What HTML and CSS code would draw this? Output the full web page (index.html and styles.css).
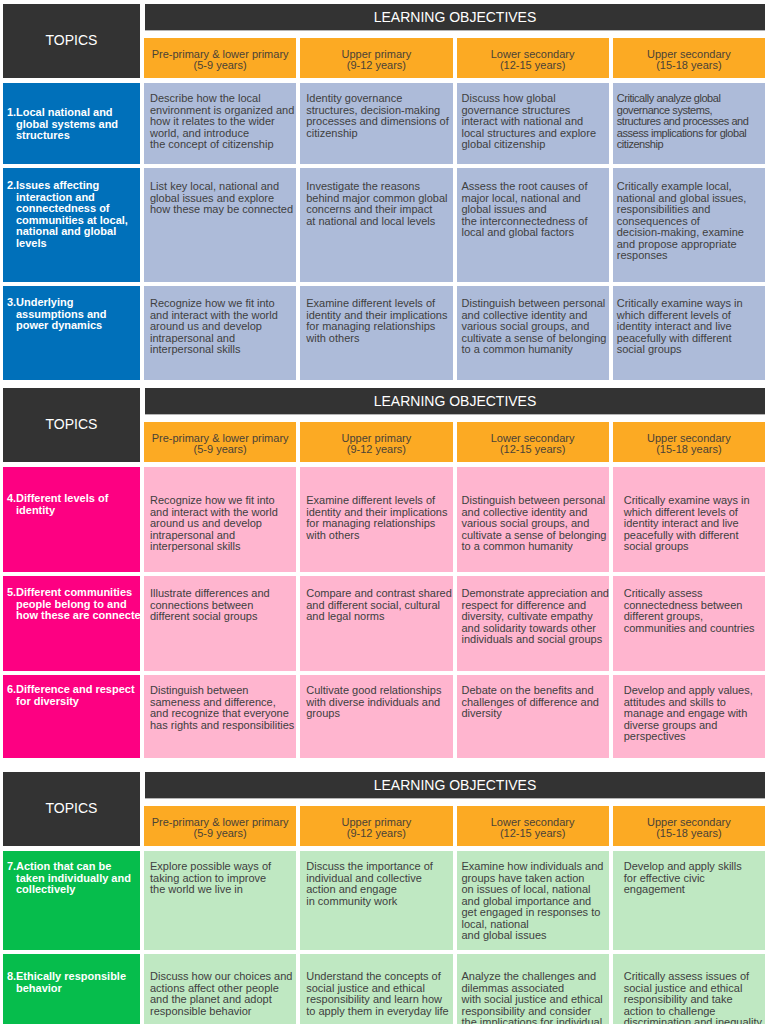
FILE: index.html
```html
<!DOCTYPE html>
<html lang="en">
<head>
<meta charset="utf-8">
<title>Global citizenship learning objectives</title>
<link rel="stylesheet" href="styles.css">
</head>
<body>
<div class="page">

  <section class="block block-blue">
    <div class="head">
      <div class="topics">TOPICS</div>
      <div class="lo">LEARNING OBJECTIVES</div>
      <div class="age">Pre-primary &amp; lower primary<br>(5-9 years)</div>
      <div class="age">Upper primary<br>(9-12 years)</div>
      <div class="age">Lower secondary<br>(12-15 years)</div>
      <div class="age">Upper secondary<br>(15-18 years)</div>
    </div>
    <div class="row row-1">
      <div class="topic"><span class="num">1.</span><span>Local national and<br>global systems and<br>structures</span></div>
      <div class="obj">Describe how the local<br>environment is organized and<br>how it relates to the wider<br>world, and introduce<br>the concept of citizenship</div>
      <div class="obj">Identity governance<br>structures, decision-making<br>processes and dimensions of<br>citizenship</div>
      <div class="obj">Discuss how global<br>governance structures<br>interact with national and<br>local structures and explore<br>global citizenship</div>
      <div class="obj condensed">Critically analyze global<br>governance systems,<br>structures and processes and<br>assess implications for global<br>citizenship</div>
    </div>
    <div class="row row-2">
      <div class="topic"><span class="num">2.</span><span>Issues affecting<br>interaction and<br>connectedness of<br>communities at local,<br>national and global<br>levels</span></div>
      <div class="obj">List key local, national and<br>global issues and explore<br>how these may be connected</div>
      <div class="obj">Investigate the reasons<br>behind major common global<br>concerns and their impact<br>at national and local levels</div>
      <div class="obj">Assess the root causes of<br>major local, national and<br>global issues and<br>the interconnectedness of<br>local and global factors</div>
      <div class="obj">Critically example local,<br>national and global issues,<br>responsibilities and<br>consequences of<br>decision-making, examine<br>and propose appropriate<br>responses</div>
    </div>
    <div class="row row-3">
      <div class="topic"><span class="num">3.</span><span>Underlying<br>assumptions and<br>power dynamics</span></div>
      <div class="obj">Recognize how we fit into<br>and interact with the world<br>around us and develop<br>intrapersonal and<br>interpersonal skills</div>
      <div class="obj">Examine different levels of<br>identity and their implications<br>for managing relationships<br>with others</div>
      <div class="obj">Distinguish between personal<br>and collective identity and<br>various social groups, and<br>cultivate a sense of belonging<br>to a common humanity</div>
      <div class="obj">Critically examine ways in<br>which different levels of<br>identity interact and live<br>peacefully with different<br>social groups</div>
    </div>
  </section>

  <section class="block block-pink">
    <div class="head">
      <div class="topics">TOPICS</div>
      <div class="lo">LEARNING OBJECTIVES</div>
      <div class="age">Pre-primary &amp; lower primary<br>(5-9 years)</div>
      <div class="age">Upper primary<br>(9-12 years)</div>
      <div class="age">Lower secondary<br>(12-15 years)</div>
      <div class="age">Upper secondary<br>(15-18 years)</div>
    </div>
    <div class="row row-4">
      <div class="topic"><span class="num">4.</span><span>Different levels of<br>identity</span></div>
      <div class="obj">Recognize how we fit into<br>and interact with the world<br>around us and develop<br>intrapersonal and<br>interpersonal skills</div>
      <div class="obj">Examine different levels of<br>identity and their implications<br>for managing relationships<br>with others</div>
      <div class="obj">Distinguish between personal<br>and collective identity and<br>various social groups, and<br>cultivate a sense of belonging<br>to a common humanity</div>
      <div class="obj">Critically examine ways in<br>which different levels of<br>identity interact and live<br>peacefully with different<br>social groups</div>
    </div>
    <div class="row row-5">
      <div class="topic"><span class="num">5.</span><span>Different communities<br>people belong to and<br>how these are connected</span></div>
      <div class="obj">Illustrate differences and<br>connections between<br>different social groups</div>
      <div class="obj">Compare and contrast shared<br>and different social, cultural<br>and legal norms</div>
      <div class="obj">Demonstrate appreciation and<br>respect for difference and<br>diversity, cultivate empathy<br>and solidarity towards other<br>individuals and social groups</div>
      <div class="obj">Critically assess<br>connectedness between<br>different groups,<br>communities and countries</div>
    </div>
    <div class="row row-6">
      <div class="topic"><span class="num">6.</span><span>Difference and respect<br>for diversity</span></div>
      <div class="obj">Distinguish between<br>sameness and difference,<br>and recognize that everyone<br>has rights and responsibilities</div>
      <div class="obj">Cultivate good relationships<br>with diverse individuals and<br>groups</div>
      <div class="obj">Debate on the benefits and<br>challenges of difference and<br>diversity</div>
      <div class="obj">Develop and apply values,<br>attitudes and skills to<br>manage and engage with<br>diverse groups and<br>perspectives</div>
    </div>
  </section>

  <section class="block block-green">
    <div class="head">
      <div class="topics">TOPICS</div>
      <div class="lo">LEARNING OBJECTIVES</div>
      <div class="age">Pre-primary &amp; lower primary<br>(5-9 years)</div>
      <div class="age">Upper primary<br>(9-12 years)</div>
      <div class="age">Lower secondary<br>(12-15 years)</div>
      <div class="age">Upper secondary<br>(15-18 years)</div>
    </div>
    <div class="row row-7">
      <div class="topic"><span class="num">7.</span><span>Action that can be<br>taken individually and<br>collectively</span></div>
      <div class="obj">Explore possible ways of<br>taking action to improve<br>the world we live in</div>
      <div class="obj">Discuss the importance of<br>individual and collective<br>action and engage<br>in community work</div>
      <div class="obj">Examine how individuals and<br>groups have taken action<br>on issues of local, national<br>and global importance and<br>get engaged in responses to<br>local, national<br>and global issues</div>
      <div class="obj">Develop and apply skills<br>for effective civic<br>engagement</div>
    </div>
    <div class="row row-8">
      <div class="topic"><span class="num">8.</span><span>Ethically responsible<br>behavior</span></div>
      <div class="obj">Discuss how our choices and<br>actions affect other people<br>and the planet and adopt<br>responsible behavior</div>
      <div class="obj">Understand the concepts of<br>social justice and ethical<br>responsibility and learn how<br>to apply them in everyday life</div>
      <div class="obj">Analyze the challenges and<br>dilemmas associated<br>with social justice and ethical<br>responsibility and consider<br>the implications for individual<br>and collective action</div>
      <div class="obj">Critically assess issues of<br>social justice and ethical<br>responsibility and take<br>action to challenge<br>discrimination and inequality</div>
    </div>
  </section>

</div>
</body>
</html>
```

FILE: styles.css
```css
* { box-sizing: border-box; }

html, body {
  margin: 0;
  padding: 0;
  background: #ffffff;
}

body {
  font-family: "Liberation Sans", Arial, sans-serif;
  color: #404040;
}

.page {
  width: 768px;
  padding: 4px 3px 0 3px;
  display: flex;
  flex-direction: column;
}

.block {
  display: flex;
  flex-direction: column;
  gap: 4px;
}

.block-pink { margin-top: 8px; }
.block-green { margin-top: 14px; }

.head,
.row {
  display: grid;
  grid-template-columns: 137px repeat(4, 1fr);
  column-gap: 4px;
}

.head {
  grid-template-rows: 26px 40px;
  row-gap: 8px;
  margin-bottom: 1px;
}

.topics {
  grid-row: 1 / 3;
  background: #333333;
  color: #ffffff;
  font-size: 14px;
  display: flex;
  align-items: center;
  justify-content: center;
  padding-bottom: 2px;
}

.lo {
  grid-column: 2 / 6;
  margin-left: 1px;
  background: #333333;
  color: #ffffff;
  font-size: 14px;
  display: flex;
  align-items: center;
  justify-content: center;
  box-shadow: 0 1px 0 #b4b4b4;
}

.age {
  background: #fcaa23;
  color: #4a4237;
  font-size: 11px;
  line-height: 11.5px;
  text-align: center;
  display: flex;
  align-items: center;
  justify-content: center;
  padding-top: 4px;
}

.topic {
  display: flex;
  color: #ffffff;
  font-weight: bold;
  font-size: 11px;
  line-height: 11.5px;
  padding-left: 4px;
  white-space: nowrap;
  overflow: hidden;
}

.topic .num {
  flex: none;
  width: 9px;
}

.obj {
  font-size: 11px;
  line-height: 11.5px;
  padding-left: 6px;
  white-space: nowrap;
  overflow: hidden;
}

.obj:nth-child(4) { padding-left: 5px; }

.block-blue .obj:nth-child(5) { padding-left: 4px; }
.block-pink .obj:nth-child(5),
.block-green .obj:nth-child(5) { padding-left: 11px; }

.obj.condensed { letter-spacing: -0.45px; }

.block-blue .topic { background: #0070ba; }
.block-blue .obj { background: #adbbd9; }

.block-pink .topic { background: #fd0082; }
.block-pink .obj { background: #ffb5cf; }

.block-green .topic { background: #06bd4c; }
.block-green .obj { background: #bfe8c2; }

.row-1 { height: 81px; }
.row-1 .topic { padding-top: 24px; }
.row-1 .obj { padding-top: 10px; }

.row-2 { height: 114px; }
.row-2 .topic { padding-top: 12px; }
.row-2 .obj { padding-top: 13px; }

.row-3 { height: 94px; }
.row-3 .topic { padding-top: 11px; }
.row-3 .obj { padding-top: 12px; }

.row-4 { height: 105px; }
.row-4 .topic { padding-top: 26px; }
.row-4 .obj { padding-top: 28px; }

.row-5 { height: 95px; }
.row-5 .topic { padding-top: 11px; }
.row-5 .obj { padding-top: 12px; }

.row-6 { height: 83px; }
.row-6 .topic { padding-top: 9px; }
.row-6 .obj { padding-top: 10px; }

.row-7 { height: 99px; }
.row-7 .topic { padding-top: 10px; }
.row-7 .obj { padding-top: 10px; }

.row-8 { height: 100px; }
.row-8 .topic { padding-top: 17px; }
.row-8 .obj { padding-top: 17px; }
```
